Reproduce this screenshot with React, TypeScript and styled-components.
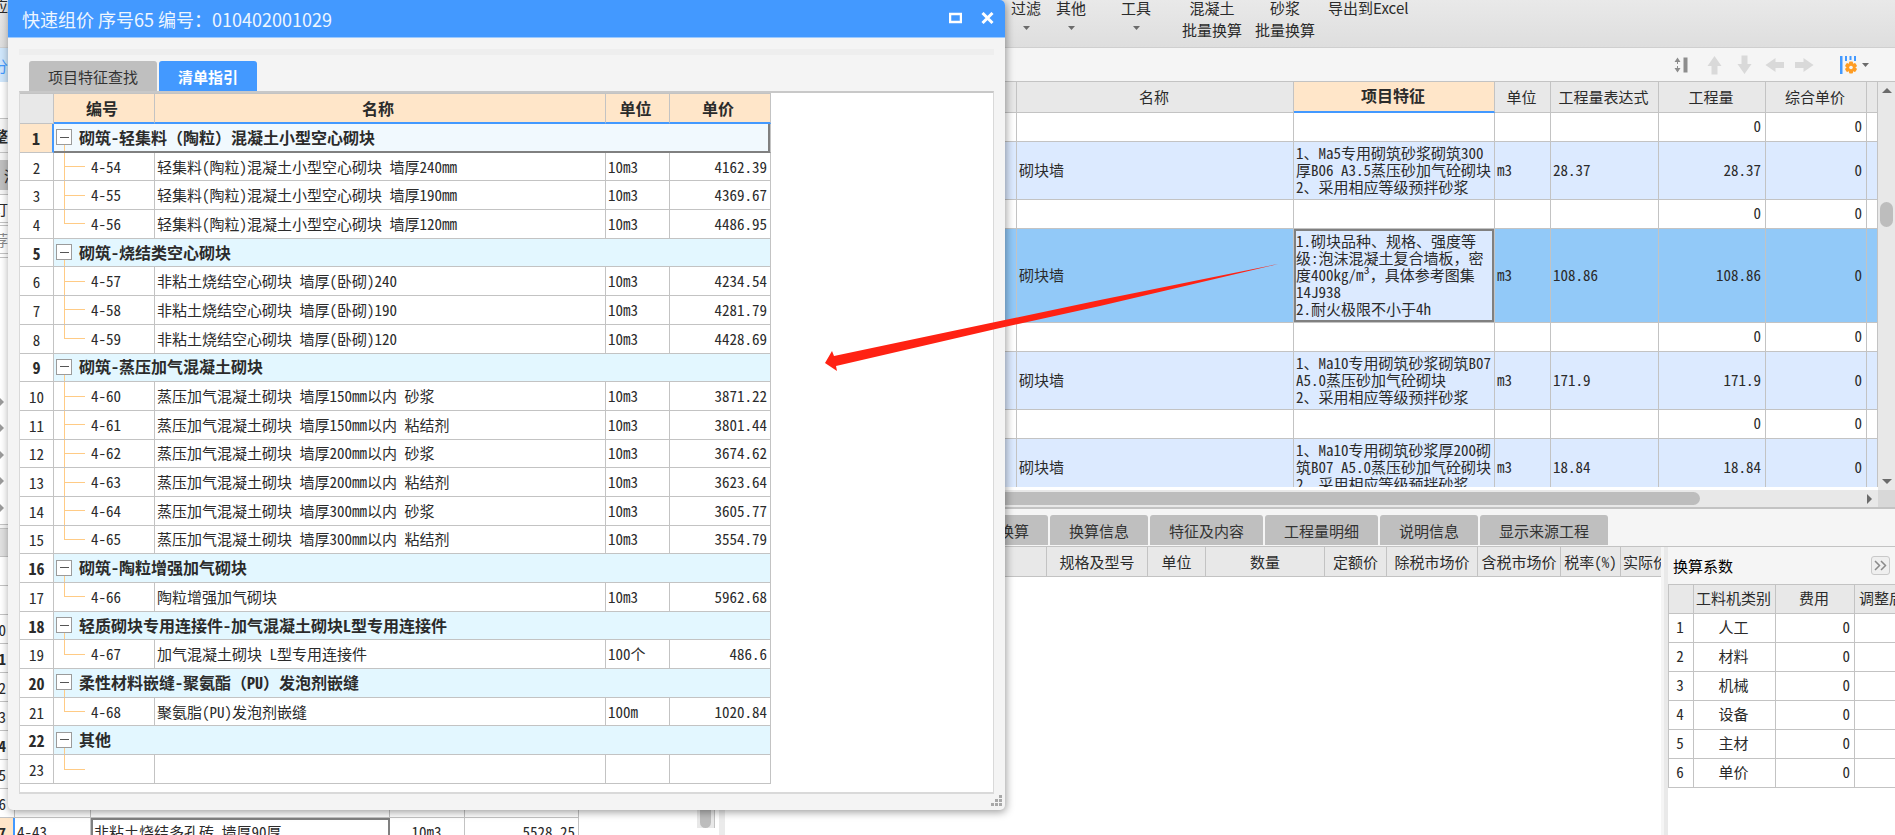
import React from "react";
import styled, { createGlobalStyle, css } from "styled-components";

const LINE = "#c3c3c3";
const BLUE = "#4399ff";
const PEACH = "#ffe6c9";
const GRID_FONT = `"Noto Sans Mono CJK SC", "Noto Sans CJK SC", sans-serif`;
const UI_FONT = `"Noto Sans CJK SC", "Noto Sans", sans-serif`;

const GlobalStyle = createGlobalStyle`
  * { box-sizing: border-box; }
  html, body, #root { height: 100%; }
  body { margin: 0; overflow: hidden; background: #fff; color: #2b2b2b; font: 15px/17px ${GRID_FONT}; }
  button { font: inherit; color: inherit; border: 0; padding: 0; background: none; }
`;

/* ---------- application frame ---------- */

const Shell = styled.div`
  position: relative;
  height: 100vh;
  display: flex;
  flex-direction: column;
  overflow: hidden;
`;

const Ribbon = styled.header`
  flex: 0 0 48px;
  display: flex;
  align-items: flex-end;
  padding-bottom: 6px;
  overflow: hidden;
  background: linear-gradient(#e9e9e9, #dedede);
  border-bottom: 1px solid #cfcfcf;
  font-family: ${UI_FONT};
`;

const RibbonLead = styled.div`
  flex: 0 0 1011px;
  height: 44px;
`;

const RibbonButton = styled.button<{ $gap?: number }>`
  display: flex;
  flex-direction: column;
  align-items: center;
  height: 44px;
  margin-left: ${(p) => p.$gap ?? 0}px;
  line-height: 22px;
  white-space: nowrap;
`;

const CaretBox = styled.span`
  display: flex;
  align-items: center;
  height: 18px;
`;

const Workspace = styled.div`
  flex: 1;
  min-height: 0;
  display: flex;
`;

const LeftPane = styled.aside`
  flex: 0 0 725px;
  display: flex;
  flex-direction: column;
  overflow: hidden;
  border-right: 6px solid #ebebeb;
`;

const RightPane = styled.main`
  flex: 1;
  min-width: 0;
  display: grid;
  grid-template-rows: 34px minmax(0, 427fr) minmax(0, 326fr);
`;

/* ---------- left pane ---------- */

const Strip = styled.div<{ $h: number; $bg?: string; $line?: boolean }>`
  flex: 0 0 ${(p) => p.$h}px;
  display: flex;
  align-items: center;
  background: ${(p) => p.$bg ?? "#fff"};
  border-bottom: ${(p) => (p.$line ? `1px solid ${LINE}` : "0")};
`;

const Edge = styled.span<{ $color?: string; $bold?: boolean }>`
  display: flex;
  justify-content: flex-end;
  width: 8px;
  color: ${(p) => p.$color ?? "inherit"};
  font-family: ${UI_FONT};
  font-weight: ${(p) => (p.$bold ? 700 : 400)};
`;

const SideTabLabel = styled.span`
  padding-left: 4px;
  font-family: ${UI_FONT};
`;

const Blank = styled.div`
  flex: 0 0 267px;
  padding-top: 137px;
  border-bottom: 1px solid ${LINE};
`;

const LeftGrid = styled.div`
  display: flex;
  justify-content: space-between;
`;

const LeftTable = styled.table`
  flex: 0 0 579px;
  width: 579px;
  table-layout: fixed;
  border-collapse: separate;
  border-spacing: 0;
  td {
    height: 29px;
    padding: 0 3px 2px 2px;
    border-right: 1px solid ${LINE};
    border-bottom: 1px solid ${LINE};
    white-space: nowrap;
  }
  td:nth-child(4) { text-align: center; }
  td:nth-child(5) { text-align: right; }
`;

const EdgeNumber = styled.td<{ $bold?: boolean; $active?: boolean }>`
  && {
    padding: 0 9px 0 0;
    direction: rtl;
    text-align: right;
    overflow: hidden;
    font-weight: ${(p) => (p.$bold ? 700 : 400)};
    ${(p) =>
      p.$active &&
      css`
        background: ${PEACH};
        border-right: 2px solid ${BLUE};
      `}
  }
`;

const FocusCell = styled.td`
  && { padding-left: 1px; border: 2px solid #808080; }
`;

const LeftTrack = styled.div`
  display: flex;
  flex-direction: column;
  width: 18px;
  height: 271px;
  margin-right: 4px;
  padding: 0 3px;
  background: #e8e8e8;
  border-right: 1px solid ${LINE};
  &::before {
    content: "";
    height: 271px;
    border-radius: 7px;
    background: #bdbdbd;
  }
`;

/* ---------- upper grid ---------- */

const ToolStrip = styled.div`
  display: flex;
  align-items: center;
  justify-content: flex-end;
  gap: 11px;
  padding-right: 26px;
  background: #f5f5f5;
  border-bottom: 1px solid ${LINE};
`;

const IconButton = styled.button<{ $before?: number; $after?: number }>`
  display: flex;
  align-items: center;
  gap: 5px;
  margin-left: ${(p) => p.$before ?? 0}px;
  margin-right: ${(p) => p.$after ?? 0}px;
`;

const UpperArea = styled.section`
  display: grid;
  grid-template-columns: minmax(0, 1fr) 17px;
  grid-template-rows: minmax(0, 1fr) 17px;
  border-bottom: 2px solid ${LINE};
`;

const GridView = styled.div`
  overflow: hidden;
  border-bottom: 3px solid #fff;
`;

const BillTable = styled.table`
  width: 100%;
  table-layout: fixed;
  border-collapse: separate;
  border-spacing: 0;
  th, td {
    border-right: 1px solid ${LINE};
    border-bottom: 1px solid ${LINE};
    overflow: hidden;
    white-space: pre;
  }
  th { height: 31px; padding: 0 2px 2px 0; font-weight: 400; background: #e8e8e8; }
  td { padding: 0 4px 3px 2px; }
`;

const ActiveTh = styled.th`
  && {
    font-size: 16px;
    font-weight: 700;
    background: ${PEACH};
    border-bottom: 2px solid ${BLUE};
  }
`;

const BillRow = styled.tr<{ $h: number; $tone?: "item" | "selected" }>`
  height: ${(p) => p.$h}px;
  background: ${(p) => (p.$tone === "selected" ? "#92c9f8" : p.$tone === "item" ? "#dceaff" : "#fff")};
`;

const FeatureTd = styled.td<{ $focus?: boolean }>`
  ${(p) =>
    p.$focus &&
    css`
      background: #dceaff;
      box-shadow: inset 0 0 0 2px #808080;
    `}
`;

const NumTd = styled.td`
  text-align: right;
`;

const VTrack = styled.div`
  display: flex;
  flex-direction: column;
  align-items: center;
  justify-content: space-between;
  padding: 6px 0;
  background: #e8e8e8;
`;

const VThumb = styled.div`
  width: 13px;
  height: 25px;
  margin: 109px 0 auto;
  border-radius: 7px;
  background: #bdbdbd;
`;

const HTrack = styled.div`
  display: flex;
  align-items: center;
  justify-content: space-between;
  padding-right: 6px;
  background: #e8e8e8;
`;

const HThumb = styled.div`
  flex: 0 0 85%;
  height: 13px;
  border-radius: 7px;
  background: #bdbdbd;
`;

const Corner = styled.div`
  background: #d8d8d8;
`;

/* ---------- lower area ---------- */

const LowerArea = styled.section`
  display: flex;
  flex-direction: column;
  min-width: 0;
  background: #f5f5f5;
`;

const TabList = styled.div`
  flex: 0 0 38px;
  display: flex;
  align-items: flex-end;
  gap: 2px;
  padding: 0 0 1px 225px;
  border-bottom: 1px solid ${LINE};
`;

const Tab = styled.button<{ $active?: boolean }>`
  height: 30px;
  padding: 0 19px;
  border-radius: 3px 3px 0 0;
  font-family: ${UI_FONT};
  white-space: nowrap;
  color: ${(p) => (p.$active ? "#fff" : "#333")};
  font-weight: ${(p) => (p.$active ? 700 : 400)};
  background: ${(p) => (p.$active ? BLUE : "#bfbfbf")};
`;

const TrailingTab = styled(Tab)`
  width: 98px;
  text-align: right;
`;

const LowerBody = styled.div`
  flex: 1;
  min-height: 0;
  display: flex;
`;

const ResourceView = styled.div`
  flex: 1;
  min-width: 0;
  overflow: hidden;
  background: #fff;
`;

const ResourceTable = styled.table`
  width: 100%;
  table-layout: fixed;
  border-collapse: separate;
  border-spacing: 0;
  th {
    height: 30px;
    padding: 0 2px;
    font-weight: 400;
    white-space: nowrap;
    overflow: hidden;
    background: #e8e8e8;
    border-right: 1px solid ${LINE};
    border-bottom: 1px solid ${LINE};
  }
  th:last-child { text-align: left; border-right: 0; }
`;

const Splitter = styled.div`
  flex: 0 0 7px;
  background: #f5f5f5;
  border-right: 4px solid #e9e9e9;
`;

const FactorPanel = styled.section`
  flex: 0 0 227px;
  overflow: hidden;
  background: #fff;
`;

const FactorHead = styled.div`
  display: flex;
  align-items: center;
  justify-content: space-between;
  height: 37px;
  padding: 0 5px;
  background: #f5f5f5;
  color: #000;
`;

const MoreButton = styled.button`
  display: grid;
  place-items: center;
  width: 19px;
  height: 19px;
  border: 1px solid #c9c9c9;
  border-radius: 3px;
  background: #efefef;
`;

const FactorTable = styled.table`
  width: 270px;
  table-layout: fixed;
  border-collapse: separate;
  border-spacing: 0;
  border-top: 1px solid ${LINE};
  border-left: 1px solid ${LINE};
  th, td {
    height: 29px;
    padding: 0 4px 3px;
    text-align: center;
    font-weight: 400;
    white-space: nowrap;
    border-right: 1px solid ${LINE};
    border-bottom: 1px solid ${LINE};
  }
  th { background: #e8e8e8; }
  th, td:nth-child(-n + 2) { padding: 0 2px 3px 0; }
  th:last-child { padding-left: 4px; text-align: left; }
  td:nth-child(3) { text-align: right; }
`;

/* ---------- dialog ---------- */

const Dialog = styled.section`
  position: absolute;
  top: 0;
  bottom: 25px;
  left: 8px;
  width: 997px;
  display: flex;
  flex-direction: column;
  border-radius: 0 5px 5px 5px;
  background: #f4f4f4;
  box-shadow: 1px 2px 8px rgba(0, 0, 0, 0.4);
`;

const TitleBar = styled.header`
  flex: 0 0 38px;
  display: flex;
  align-items: center;
  justify-content: space-between;
  padding: 0 11px 0 14px;
  border-radius: 0 5px 0 0;
  border-bottom: 1px solid #9ccaff;
  background: ${BLUE};
  color: #eef6ff;
`;

const Title = styled.h1`
  margin: 0;
  font: 400 18px/24px ${UI_FONT};
`;

const WindowButtons = styled.div`
  display: flex;
  gap: 19px;
  padding-bottom: 2px;
`;

const DialogBody = styled.div`
  flex: 1;
  min-height: 0;
  display: flex;
  flex-direction: column;
  padding: 11px 11px 0;
`;

const Groove = styled.div`
  flex: 0 0 6px;
  margin-bottom: 6px;
  background: #eeeeee;
`;

const DialogTabs = styled.div`
  display: flex;
  gap: 2px;
  padding-left: 10px;
`;

const Frame = styled.div`
  flex: 1;
  min-height: 0;
  padding-bottom: 8px;
  background: #fff;
  border: solid #d9d9d9;
  border-width: 2px 1px 2px;
  border-top-color: #c8c8c8;
`;

const GuideTable = styled.table`
  width: 751px;
  height: 100%;
  table-layout: fixed;
  border-collapse: separate;
  border-spacing: 0;
  th, td {
    height: 28px;
    padding: 0 2px 1px;
    white-space: nowrap;
    text-align: left;
    border-right: 1px solid ${LINE};
    border-bottom: 1px solid ${LINE};
  }
  thead th {
    height: 31px;
    padding: 0 6px 0 2px;
    font-size: 16px;
    text-align: center;
    background: ${PEACH};
    border-top: 1px solid ${LINE};
    border-bottom: 2px solid ${BLUE};
  }
  thead th:first-child { background: #e8e8e8; border-bottom: 1px solid ${LINE}; }
`;

const IndexTh = styled.th<{ $bold?: boolean; $focus?: boolean }>`
  && {
    padding: 1px 0 0;
    text-align: center;
    font-size: ${(p) => (p.$bold ? 16 : 15)}px;
    font-weight: ${(p) => (p.$bold ? 700 : 400)};
    background: ${(p) => (p.$focus ? PEACH : "#fff")};
    border-right: ${(p) => (p.$focus ? `2px solid ${BLUE}` : `1px solid ${LINE}`)};
  }
`;

const GroupTd = styled.td<{ $focus?: boolean }>`
  background: linear-gradient(#ffcb85, #ffcb85) 10px 100% / 1px 50% no-repeat
    ${(p) => (p.$focus ? "#f1f9fe" : "#e3f7ff")};
  ${(p) =>
    p.$focus &&
    css`
      && { box-shadow: inset -2px -1px #808080; border-bottom-color: #808080; }
    `}
`;

const GroupLabel = styled.div`
  display: flex;
  align-items: center;
  gap: 7px;
  font-size: 16px;
  font-weight: 700;
`;

const Toggle = styled.button`
  display: grid;
  place-items: center;
  width: 16px;
  height: 16px;
  border: 1px solid #9b9b9b;
  background: #fff;
  &::before { content: ""; width: 9px; height: 1px; background: #555; }
`;

const CodeTd = styled.td<{ $last?: boolean }>`
  && {
    padding-left: 37px;
    background: linear-gradient(#ffcb85, #ffcb85) 10px 0 / 1px ${(p) => (p.$last ? "50%" : "100%")} no-repeat,
      linear-gradient(#ffcb85, #ffcb85) 10px 50% / 21px 1px no-repeat;
  }
`;

const PriceTd = styled.td`
  && { text-align: right; padding-right: 3px; }
`;

const Grip = styled.div`
  flex: 0 0 16px;
  display: flex;
  justify-content: flex-end;
  padding: 1px 3px 0 0;
`;

const Pointer = styled.svg`
  position: absolute;
  top: 260px;
  left: 822px;
  width: 460px;
  height: 114px;
  pointer-events: none;
`;

/* ---------- icons ---------- */

const Caret = ({ dir = "down", w = 7, color = "#6b6b6b" }: { dir?: "down" | "up" | "right"; w?: number; color?: string }) => {
  const h = Math.ceil(w / 2);
  if (dir === "right")
    return <svg width={h} height={w}><path d={`M0 0L${h} ${w / 2}L0 ${w}Z`} fill={color} /></svg>;
  return (
    <svg width={w} height={h}>
      <path d={dir === "down" ? `M0 0H${w}L${w / 2} ${h}Z` : `M0 ${h}H${w}L${w / 2} 0Z`} fill={color} />
    </svg>
  );
};

const MoveArrow = ({ turn }: { turn: number }) => (
  <svg width="19" height="20" viewBox="0 0 19 20">
    <path d="M9.500 1L16.500 11H12.500V19.500H6.500V11H2.500Z" fill="#d9d9d9" transform={`rotate(${turn} 9.500 10)`} />
  </svg>
);

const SortIcon = () => (
  <svg width="14" height="16" viewBox="0 0 14 16">
    <path d="M0.500 5L3.500 0.500L6.500 5ZM0.500 11L3.500 15.500L6.500 11ZM3 5h1v2h-1zM3 9h1v2h-1z" fill="#8d8d8d" />
    <rect x="9.500" y="0.500" width="4" height="15" fill="#8d8d8d" />
  </svg>
);

const ColumnsIcon = () => (
  <svg width="18" height="20" viewBox="0 0 18 20">
    <g fill="#4399ff">
      <rect x="1" y="1" width="2.500" height="18" />
      <rect x="6" y="1" width="2" height="5" />
      <rect x="10.500" y="1" width="2" height="4" />
      <rect x="15" y="1" width="2" height="5" />
    </g>
    <g transform="translate(12 12.500)" fill="#ff9d24">
      {[0, 60, 120, 180, 240, 300].map((a) => (
        <rect key={a} x="-2" y="-6" width="4" height="4" rx="1" transform={`rotate(${a})`} />
      ))}
      <circle r="4.500" />
      <circle r="1.800" fill="#f5f5f5" />
    </g>
  </svg>
);

/* ---------- data ---------- */

type GuideRow = { group?: string; code?: string; name?: string; unit?: string; price?: string; last?: boolean };

const item = (code: string, name: string, price: string, last = false, unit = "10m3"): GuideRow => ({ code, name, price, last, unit });

const guide: GuideRow[] = [
  { group: "砌筑-轻集料（陶粒）混凝土小型空心砌块" },
  item("4-54", "轻集料(陶粒)混凝土小型空心砌块 墙厚240mm", "4162.39"),
  item("4-55", "轻集料(陶粒)混凝土小型空心砌块 墙厚190mm", "4369.67"),
  item("4-56", "轻集料(陶粒)混凝土小型空心砌块 墙厚120mm", "4486.95", true),
  { group: "砌筑-烧结类空心砌块" },
  item("4-57", "非粘土烧结空心砌块 墙厚(卧砌)240", "4234.54"),
  item("4-58", "非粘土烧结空心砌块 墙厚(卧砌)190", "4281.79"),
  item("4-59", "非粘土烧结空心砌块 墙厚(卧砌)120", "4428.69", true),
  { group: "砌筑-蒸压加气混凝土砌块" },
  item("4-60", "蒸压加气混凝土砌块 墙厚150mm以内 砂浆", "3871.22"),
  item("4-61", "蒸压加气混凝土砌块 墙厚150mm以内 粘结剂", "3801.44"),
  item("4-62", "蒸压加气混凝土砌块 墙厚200mm以内 砂浆", "3674.62"),
  item("4-63", "蒸压加气混凝土砌块 墙厚200mm以内 粘结剂", "3623.64"),
  item("4-64", "蒸压加气混凝土砌块 墙厚300mm以内 砂浆", "3605.77"),
  item("4-65", "蒸压加气混凝土砌块 墙厚300mm以内 粘结剂", "3554.79", true),
  { group: "砌筑-陶粒增强加气砌块" },
  item("4-66", "陶粒增强加气砌块", "5962.68", true),
  { group: "轻质砌块专用连接件-加气混凝土砌块L型专用连接件" },
  item("4-67", "加气混凝土砌块 L型专用连接件", "486.6", true, "100个"),
  { group: "柔性材料嵌缝-聚氨酯（PU）发泡剂嵌缝" },
  item("4-68", "聚氨脂(PU)发泡剂嵌缝", "1020.84", true, "100m"),
  { group: "其他" },
  item("", "", "", true, ""),
];

type Bill = { h: number; feature?: string; qty?: string; selected?: boolean };

const bills: Bill[] = [
  { h: 29 },
  { h: 58, feature: "1、Ma5专用砌筑砂浆砌筑300\n厚B06 A3.5蒸压砂加气砼砌块\n2、采用相应等级预拌砂浆", qty: "28.37" },
  { h: 29 },
  { h: 94, feature: "1.砌块品种、规格、强度等\n级:泡沫混凝土复合墙板，密\n度400kg/m³，具体参考图集\n14J938\n2.耐火极限不小于4h", qty: "108.86", selected: true },
  { h: 29 },
  { h: 58, feature: "1、Ma10专用砌筑砂浆砌筑B07\nA5.0蒸压砂加气砼砌块\n2、采用相应等级预拌砂浆", qty: "171.9" },
  { h: 29 },
  { h: 58, feature: "1、Ma10专用砌筑砂浆厚200砌\n筑B07 A5.0蒸压砂加气砼砌块\n2、采用相应等级预拌砂浆", qty: "18.84" },
];

const leftNumbers = ["", "", "0", "1", "2", "3", "4", "5", "6"];
const boldNumbers = ["1", "4"];
const factors = ["人工", "材料", "机械", "设备", "主材", "单价"];

/* ---------- sections ---------- */

const LeftArea = () => (
  <LeftPane>
    <Strip $h={34} $bg="#cfe6fb"><Edge $color={BLUE}>分</Edge></Strip>
    <Strip $h={37} $line />
    <Strip $h={34} $bg="#f5f5f5" $line><Edge $bold>整</Edge></Strip>
    <Strip $h={7} $bg="#f5f5f5" />
    <Strip $h={30} $bg="#bfbfbf"><SideTabLabel>清</SideTabLabel></Strip>
    <Strip $h={5} $bg="#f5f5f5" $line />
    <Strip $h={28} $line><Edge>订</Edge></Strip>
    <Strip $h={3} $line />
    <Strip $h={28} $line><Edge $color="#8a8a8a">荐</Edge></Strip>
    <Strip $h={4} $line />
    <Blank>
      <svg width="4" height="120">
        {[7, 33, 60, 86, 113].map((y) => (
          <path key={y} d={`M0 ${y - 4}L4 ${y}L0 ${y + 4}Z`} fill="#9a9a9a" />
        ))}
      </svg>
    </Blank>
    <Strip $h={4} $bg="#f5f5f5" $line />
    <Strip $h={28} $bg="#e0e0e0" $line />
    <LeftGrid>
      <LeftTable>
        <colgroup>
          <col style={{ width: 15 }} /><col style={{ width: 76 }} /><col style={{ width: 299 }} />
          <col style={{ width: 75 }} /><col style={{ width: 114 }} />
        </colgroup>
        <tbody>
          {leftNumbers.map((n, i) => (
            <tr key={i}>
              <EdgeNumber $bold={boldNumbers.includes(n)}>{n}</EdgeNumber>
              <td /><td /><td /><td />
            </tr>
          ))}
          <tr>
            <EdgeNumber $bold $active>7</EdgeNumber>
            <td>4-43</td>
            <FocusCell>非粘土烧结多孔砖 墙厚90厚</FocusCell>
            <td>10m3</td>
            <td>5528.25</td>
          </tr>
        </tbody>
      </LeftTable>
      <LeftTrack />
    </LeftGrid>
  </LeftPane>
);

const BillGrid = () => (
  <UpperArea>
    <GridView>
      <BillTable>
        <colgroup>
          <col /><col style={{ width: 277 }} /><col style={{ width: 201 }} /><col style={{ width: 56 }} />
          <col style={{ width: 108 }} /><col style={{ width: 107 }} /><col style={{ width: 101 }} /><col style={{ width: 11 }} />
        </colgroup>
        <thead>
          <tr>
            <th /><th>名称</th><ActiveTh>项目特征</ActiveTh><th>单位</th><th>工程量表达式</th><th>工程量</th><th>综合单价</th><th />
          </tr>
        </thead>
        <tbody>
          {bills.map((b, i) => (
            <BillRow key={i} $h={b.h} $tone={b.selected ? "selected" : b.qty ? "item" : undefined}>
              <td />
              <td>{b.qty && "砌块墙"}</td>
              <FeatureTd $focus={b.selected}>{b.feature}</FeatureTd>
              <td>{b.qty && "m3"}</td>
              <td>{b.qty}</td>
              <NumTd>{b.qty ?? "0"}</NumTd>
              <NumTd>0</NumTd>
              <td />
            </BillRow>
          ))}
        </tbody>
      </BillTable>
    </GridView>
    <VTrack>
      <Caret dir="up" w={10} />
      <VThumb />
      <Caret w={10} />
    </VTrack>
    <HTrack>
      <HThumb />
      <Caret dir="right" w={10} />
    </HTrack>
    <Corner />
  </UpperArea>
);

const LowerPanels = () => (
  <LowerArea>
    <TabList>
      <TrailingTab>换算</TrailingTab>
      {["换算信息", "特征及内容", "工程量明细", "说明信息", "显示来源工程"].map((t) => (
        <Tab key={t}>{t}</Tab>
      ))}
    </TabList>
    <LowerBody>
      <ResourceView>
        <ResourceTable>
          <colgroup>
            <col />
            {[101, 58, 119, 62, 91, 83, 60, 40].map((w, i) => <col key={i} style={{ width: w }} />)}
          </colgroup>
          <thead>
            <tr>
              <th />
              {["规格及型号", "单位", "数量", "定额价", "除税市场价", "含税市场价", "税率(%)", "实际价"].map((t) => (
                <th key={t}>{t}</th>
              ))}
            </tr>
          </thead>
        </ResourceTable>
      </ResourceView>
      <Splitter />
      <FactorPanel>
        <FactorHead>
          换算系数
          <MoreButton aria-label="展开">
            <svg width="13" height="11" fill="none" stroke="#8a8a8a" strokeWidth="1.500">
              <path d="M1 1L5.500 5.500L1 10M7 1L11.500 5.500L7 10" />
            </svg>
          </MoreButton>
        </FactorHead>
        <FactorTable>
          <colgroup>
            <col style={{ width: 25 }} /><col style={{ width: 82 }} /><col style={{ width: 79 }} /><col style={{ width: 84 }} />
          </colgroup>
          <thead>
            <tr><th /><th>工料机类别</th><th>费用</th><th>调整后</th></tr>
          </thead>
          <tbody>
            {factors.map((f, i) => (
              <tr key={f}><td>{i + 1}</td><td>{f}</td><td>0</td><td /></tr>
            ))}
          </tbody>
        </FactorTable>
      </FactorPanel>
    </LowerBody>
  </LowerArea>
);

const QuickPriceDialog = () => (
  <Dialog role="dialog" aria-labelledby="dialog-title">
    <TitleBar>
      <Title id="dialog-title">快速组价 序号65 编号：010402001029</Title>
      <WindowButtons>
        <button aria-label="最大化">
          <svg width="13" height="12" style={{ display: "block" }}>
            <rect x="1" y="2" width="11" height="8" fill="none" stroke="#fff" strokeWidth="2.500" />
          </svg>
        </button>
        <button aria-label="关闭">
          <svg width="13" height="12" style={{ display: "block" }}>
            <path d="M1.500 1L11.500 11M11.500 1L1.500 11" stroke="#fff" strokeWidth="3" />
          </svg>
        </button>
      </WindowButtons>
    </TitleBar>
    <DialogBody>
      <Groove />
      <DialogTabs>
        <Tab>项目特征查找</Tab>
        <Tab $active>清单指引</Tab>
      </DialogTabs>
      <Frame>
        <GuideTable>
          <colgroup>
            <col style={{ width: 34 }} /><col style={{ width: 101 }} /><col style={{ width: 451 }} />
            <col style={{ width: 64 }} /><col style={{ width: 101 }} />
          </colgroup>
          <thead>
            <tr><th /><th>编号</th><th>名称</th><th>单位</th><th>单价</th></tr>
          </thead>
          <tbody>
            {guide.map((r, i) => (
              <tr key={i}>
                <IndexTh $bold={!!r.group} $focus={i === 0}>{i + 1}</IndexTh>
                {r.group ? (
                  <GroupTd colSpan={4} $focus={i === 0}>
                    <GroupLabel><Toggle aria-label="折叠" />{r.group}</GroupLabel>
                  </GroupTd>
                ) : (
                  <>
                    <CodeTd $last={r.last}>{r.code}</CodeTd>
                    <td>{r.name}</td>
                    <td>{r.unit}</td>
                    <PriceTd>{r.price}</PriceTd>
                  </>
                )}
              </tr>
            ))}
          </tbody>
        </GuideTable>
      </Frame>
    </DialogBody>
    <Grip>
      <svg width="11" height="11" fill="#a8a8a8">
        <path d="M8 0h3v3h-3zM8 4h3v3h-3zM4 4h3v3h-3zM8 8h3v3h-3zM4 8h3v3h-3zM0 8h3v3h-3z" />
      </svg>
    </Grip>
  </Dialog>
);

export default function App() {
  return (
    <Shell>
      <GlobalStyle />
      <Ribbon>
        <RibbonLead><Edge>应</Edge></RibbonLead>
        <RibbonButton>过滤<CaretBox><Caret /></CaretBox></RibbonButton>
        <RibbonButton $gap={15}>其他<CaretBox><Caret /></CaretBox></RibbonButton>
        <RibbonButton $gap={35}>工具<CaretBox><Caret /></CaretBox></RibbonButton>
        <RibbonButton $gap={31}><span>混凝土</span><span>批量换算</span></RibbonButton>
        <RibbonButton $gap={13}><span>砂浆</span><span>批量换算</span></RibbonButton>
        <RibbonButton $gap={13}>导出到Excel</RibbonButton>
      </Ribbon>
      <Workspace>
        <LeftArea />
        <RightPane>
          <ToolStrip>
            <IconButton aria-label="行高" $after={6}><SortIcon /></IconButton>
            <IconButton aria-label="上移"><MoveArrow turn={0} /></IconButton>
            <IconButton aria-label="下移"><MoveArrow turn={180} /></IconButton>
            <IconButton aria-label="左移"><MoveArrow turn={-90} /></IconButton>
            <IconButton aria-label="右移"><MoveArrow turn={90} /></IconButton>
            <IconButton aria-label="列设置" $before={14}><ColumnsIcon /><Caret /></IconButton>
          </ToolStrip>
          <BillGrid />
          <LowerPanels />
        </RightPane>
      </Workspace>
      <QuickPriceDialog />
      <Pointer viewBox="822 260 460 114" aria-hidden="true">
        <path d="M825 363L832 351L834 356L1000 321L1100 300L1278 264L1100 306L1000 328L836 366L837 371Z" fill="#ff2213" />
      </Pointer>
    </Shell>
  );
}
